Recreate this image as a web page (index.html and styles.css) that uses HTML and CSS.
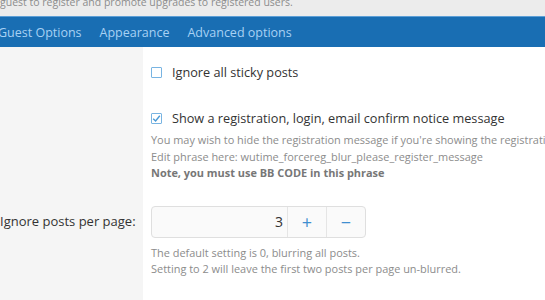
FILE: index.html
```html
<!DOCTYPE html>
<html>
<head>
  <title>Force registration options</title>
  <link rel="stylesheet" href="styles.css">
</head>
<body>
  <div class="explain">guest to register and promote upgrades to registered users.</div>

  <div class="tabs">
    <a class="tab">Guest Options</a>
    <a class="tab">Appearance</a>
    <a class="tab">Advanced options</a>
  </div>

  <div class="form">
    <div class="row first">
      <div class="row-label"></div>
      <div class="row-input">
        <label class="check">
          <span class="box"></span>
          Ignore all sticky posts
        </label>
      </div>
    </div>

    <div class="row">
      <div class="row-label"></div>
      <div class="row-input">
        <label class="check">
          <span class="box checked">
            <svg width="9" height="9" viewBox="0 0 9 9"><path d="M1.2 4.8 L3.6 7 L7.8 1.8" fill="none" stroke="#4a9ad6" stroke-width="1.4"/></svg>
          </span>
          Show a registration, login, email confirm notice message
        </label>
        <div class="hint">
          You may wish to hide the registration message if you're showing the registration form instead.<br>
          Edit phrase here: wutime_forcereg_blur_please_register_message<br>
          <b>Note, you must use BB CODE in this phrase</b>
        </div>
      </div>
    </div>

    <div class="row last">
      <div class="row-label"><span>Ignore posts per page:</span></div>
      <div class="row-input">
        <div class="spinbox">
          <span class="value">3</span>
          <span class="step plus">+</span>
          <span class="step minus">&minus;</span>
        </div>
        <div class="hint">
          The default setting is 0, blurring all posts.<br>
          Setting to 2 will leave the first two posts per page un-blurred.
        </div>
      </div>
    </div>
  </div>
</body>
</html>
```

FILE: styles.css
```css
body {
  margin: 0;
  font-family: "Open Sans", "Noto Sans", sans-serif;
  background-color: #fff;
  overflow: hidden;
}
.explain {
  background-color: #ececec;
  color: #8d8d8d;
  font-size: 10.5px;
  height: 16px;
  line-height: 4px;
  white-space: nowrap;
  overflow: hidden;
}
.tabs {
  background-color: #196eb3;
  border-top: 1px solid #5d9fd6;
  height: 30px;
  display: flex;
  align-items: center;
  white-space: nowrap;
}
.tab {
  color: #a8d1f3;
  font-size: 12.5px;
  margin-right: 18px;
}
.tab:first-child { margin-left: -2px; }

.row {
  display: grid;
  grid-template-columns: 143px 1fr;
}
.row-label {
  background-color: #f5f5f5;
  font-size: 13px;
  color: #333;
  text-align: right;
  padding-right: 10px;
  white-space: nowrap;
}
.row-input {
  padding: 0 0 0 8px;
  white-space: nowrap;
}
.row.first .row-input { padding-top: 15px; padding-bottom: 26px; }
.row .row-label span { display: block; padding-top: 30px; }
.row.last .row-input { padding-top: 24px; padding-bottom: 40px; }

.check {
  display: flex;
  align-items: center;
  font-size: 12.7px;
  color: #333;
  height: 20px;
}
.box {
  width: 9px; height: 9px;
  border: 1px solid #78b4e2;
  border-radius: 1px;
  margin-right: 10px;
  display: flex;
  align-items: center;
  justify-content: center;
}
.hint {
  font-size: 10.95px;
  color: #8c8c8c;
  line-height: 16.5px;
  margin-top: 4px;
}
.spinbox + .hint { margin-top: 7px; }
.hint b { color: #777; font-weight: 700; }

.spinbox {
  display: flex;
  width: 213px;
  height: 30px;
  border: 1px solid #dfdfdf;
  border-radius: 4px;
  background-color: #fafafa;
  font-size: 14px;
  color: #333;
}
.value {
  flex: 1;
  text-align: right;
  padding-right: 4px;
  line-height: 30px;
}
.step {
  width: 38px;
  border-left: 1px solid #e5e5e5;
  text-align: center;
  line-height: 30px;
  color: #3f8fd0;
  font-size: 18px;
}
```
